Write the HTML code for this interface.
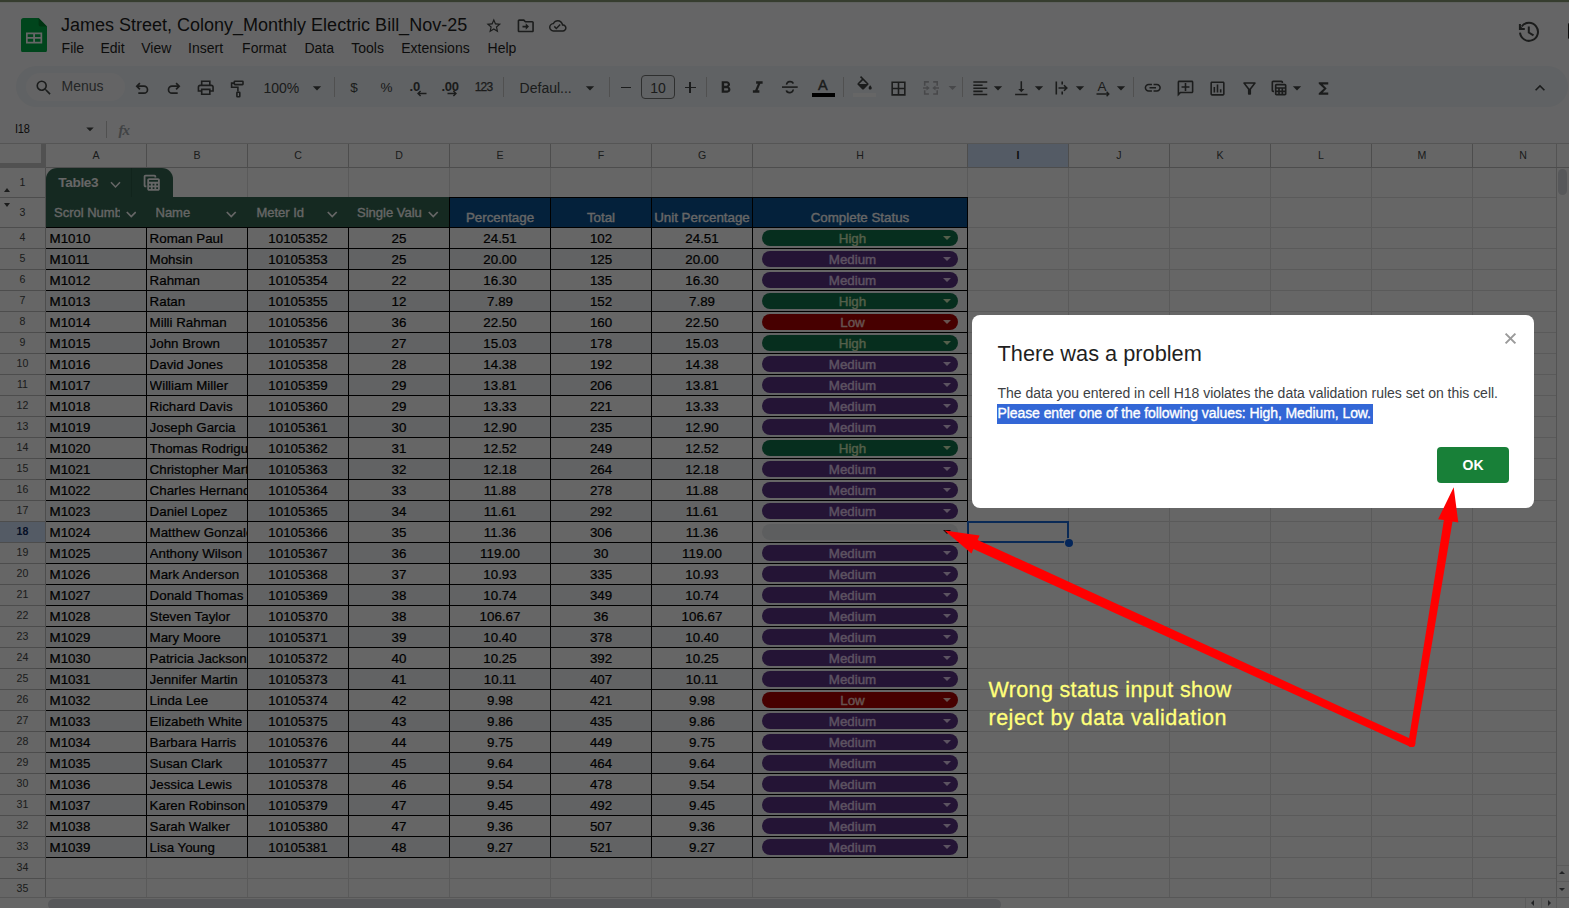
<!DOCTYPE html><html><head><meta charset="utf-8"><title>Sheet</title><style>

html,body{margin:0;padding:0;}
body{width:1569px;height:908px;overflow:hidden;background:#fff;font-family:"Liberation Sans",sans-serif;}
#root{position:relative;width:1569px;height:908px;overflow:hidden;background:#fff;}
.a{position:absolute;display:block;}
.t{position:absolute;white-space:nowrap;line-height:1;}
.c{position:absolute;white-space:nowrap;overflow:hidden;line-height:1;font-size:13.33px;color:#000;height:20px;}
.c span{position:absolute;top:3.7px;-webkit-text-stroke:0.22px #000;}
.chip{position:absolute;height:16px;border-radius:8px;left:762px;width:196px;}
.chip b{position:absolute;left:0;width:181px;text-align:center;font-weight:normal;font-size:13.33px;line-height:1;top:1.5px;-webkit-text-stroke:0.4px currentColor;}
.chip i{position:absolute;left:181px;top:6px;width:0;height:0;border-left:4px solid transparent;border-right:4px solid transparent;border-top:4.5px solid #fff;}
.sep{position:absolute;width:1px;background:#c7c7c7;top:77px;height:20px;}

</style></head><body><div id="root">
<div id="sheet" class="a" style="left:0;top:0;width:1569px;height:908px;background:#fff;">
<div class="a" style="left:0;top:0;width:1569px;height:143px;background:#fdfdfe;"></div>
<svg class="a" style="left:21px;top:17.5px" width="26" height="34.5" viewBox="0 0 26 34.5"><path d="M2.6 0H17.6L26 8.6V31.9a2.6 2.6 0 0 1-2.6 2.6H2.6A2.600 2.600 0 0 1 0 31.900V2.600A2.600 2.600 0 0 1 2.600 0z" fill="#00ac47"/><path d="M17.6 0L26 8.6H19.600a2 2 0 0 1-2-2z" fill="#00832d"/><path d="M5 14.500h16.200v10.900H5zM6.700 16.200v2.900h5.500v-2.900zm7.300 0v2.900h5.500v-2.900zM6.700 20.800v2.900h5.500v-2.900zm7.300 0v2.900h5.500v-2.900z" fill="#fff" fill-rule="evenodd"/></svg>
<div class="t title" style="left:61px;top:15.76px;font-size:18px;color:#1f1f1f;">James Street, Colony_Monthly Electric Bill_Nov-25</div>
<svg class="a" style="left:485.40px;top:16.50px;" width="17.6" height="17.6" viewBox="0 0 24 24" ><path fill="#444746" d="M22 9.24l-7.19-.62L12 2 9.19 8.63 2 9.24l5.46 4.73L5.82 21 12 17.27 18.18 21l-1.63-7.03L22 9.24zM12 15.4l-3.76 2.27 1-4.28-3.32-2.88 4.38-.38L12 6.1l1.71 4.04 4.38.38-3.32 2.88 1 4.28L12 15.4z"/></svg>
<svg class="a" style="left:516.25px;top:16.25px;" width="19.5" height="19.5" viewBox="0 0 24 24" ><path fill="#444746" d="M20 6h-8l-2-2H4c-1.1 0-2 .9-2 2v12c0 1.1.9 2 2 2h16c1.1 0 2-.9 2-2V8c0-1.1-.9-2-2-2zm0 12H4V6h5.17l2 2H20v10zm-8-1l4-4-4-4v3H8v2h4v3z"/></svg>
<svg class="a" style="left:549.20px;top:16.70px;" width="17.6" height="17.6" viewBox="0 0 24 24" ><path fill="#444746" d="M19.35 10.04C18.67 6.59 15.64 4 12 4 9.11 4 6.6 5.64 5.35 8.04 2.34 8.36 0 10.91 0 14c0 3.31 2.69 6 6 6h13c2.76 0 5-2.24 5-5 0-2.64-2.05-4.78-4.65-4.96zM19 18H6c-2.21 0-4-1.79-4-4 0-2.05 1.53-3.76 3.56-3.97l1.07-.11.5-.95C8.08 7.14 9.94 6 12 6c2.62 0 4.88 1.86 5.39 4.43l.3 1.5 1.53.11c1.56.1 2.78 1.41 2.78 2.96 0 1.65-1.35 3-3 3zm-9-3.82l-2.09-2.09L6.5 13.5 10 17l6.01-6.01-1.41-1.41z"/></svg>
<div class="t menu" style="left:61.6px;top:40.85px;font-size:14px;color:#1f1f1f;">File</div>
<div class="t menu" style="left:100.4px;top:40.85px;font-size:14px;color:#1f1f1f;">Edit</div>
<div class="t menu" style="left:141.20000000000002px;top:40.85px;font-size:14px;color:#1f1f1f;">View</div>
<div class="t menu" style="left:188.1px;top:40.85px;font-size:14px;color:#1f1f1f;">Insert</div>
<div class="t menu" style="left:242.1px;top:40.85px;font-size:14px;color:#1f1f1f;">Format</div>
<div class="t menu" style="left:304.4px;top:40.85px;font-size:14px;color:#1f1f1f;">Data</div>
<div class="t menu" style="left:351.29999999999995px;top:40.85px;font-size:14px;color:#1f1f1f;">Tools</div>
<div class="t menu" style="left:401.2px;top:40.85px;font-size:14px;color:#1f1f1f;">Extensions</div>
<div class="t menu" style="left:487.59999999999997px;top:40.85px;font-size:14px;color:#1f1f1f;">Help</div>
<svg class="a" style="left:1517px;top:20px" width="24" height="24" viewBox="0 0 24 24"><path d="M3 12.700A9 9 0 1 0 4.700 6.500" fill="none" stroke="#444746" stroke-width="2"/><path d="M2.900 4.100V8.900H7.800" fill="none" stroke="#444746" stroke-width="2"/><path d="M2.900 5.500L6.400 8.900H2.900z" fill="#444746"/><path d="M11.800 6.400V12.500L16.500 15.400" fill="none" stroke="#444746" stroke-width="2"/></svg>
<div class="a" style="left:1567.600px;top:23px;width:3px;height:15.500px;border-radius:2px;background:#1f1f1f;"></div>
<div class="a" style="left:16px;top:66.300px;width:1552px;height:40.700px;border-radius:20.350px;background:#f0f4f9;"></div>
<div class="a" style="left:26px;top:73px;width:99px;height:28px;border-radius:14px;background:#f9fbfd;"></div>
<svg class="a" style="left:34.05px;top:78.15px;" width="19.5" height="19.5" viewBox="0 0 24 24" ><path fill="#444746" d="M15.5 14h-.79l-.28-.27A6.471 6.471 0 0 0 16 9.5 6.5 6.5 0 1 0 9.5 16c1.61 0 3.09-.59 4.23-1.57l.27.28v.79l5 4.99L20.49 19l-4.99-5zm-6 0C7.01 14 5 11.99 5 9.5S7.01 5 9.5 5 14 7.01 14 9.5 11.99 14 9.5 14z"/></svg>
<div class="t" style="left:61.5px;top:79.15px;font-size:14px;color:#5a5d60;">Menus</div>
<svg class="a" style="left:134px;top:80px" width="16" height="16" viewBox="0 0 16 16"><path d="M3 6.200H10a3.500 3.500 0 0 1 0 7H4.300" fill="none" stroke="#444746" stroke-width="1.700"/><path d="M5.900 3.100L2.800 6.200 5.900 9.300" fill="none" stroke="#444746" stroke-width="1.700"/></svg>
<svg class="a" style="left:166px;top:80px" width="16" height="16" viewBox="0 0 16 16"><path d="M13 6.200H6a3.500 3.500 0 0 0 0 7h5.700" fill="none" stroke="#444746" stroke-width="1.700"/><path d="M10.100 3.100l3.100 3.100-3.100 3.100" fill="none" stroke="#444746" stroke-width="1.700"/></svg>
<svg class="a" style="left:196.25px;top:78.45px;" width="19.5" height="19.5" viewBox="0 0 24 24" ><path fill="#444746" d="M19 8h-1V3H6v5H5c-1.66 0-3 1.34-3 3v6h4v4h12v-4h4v-6c0-1.66-1.34-3-3-3zM8 5h8v3H8V5zm8 14H8v-4h8v4zm2-4v-2H6v2H4v-4c0-.55.45-1 1-1h14c.55 0 1 .45 1 1v4h-2z"/></svg>
<svg class="a" style="left:229px;top:79.5px" width="17" height="18" viewBox="0 0 17 18"><rect x="5.300" y="1.200" width="8.700" height="3.400" rx="0.600" fill="none" stroke="#444746" stroke-width="1.600"/><path d="M5.300 3.100H2.600V7.200H8.900V11.600" fill="none" stroke="#444746" stroke-width="1.600"/><rect x="7.900" y="12.200" width="2.900" height="4.500" rx="0.500" fill="none" stroke="#444746" stroke-width="1.600"/></svg>
<div class="t" style="left:263.4px;top:81.15px;font-size:14px;color:#444746;">100%</div>
<svg class="a" style="left:307.00px;top:78.00px;" width="20" height="20" viewBox="0 0 24 24" ><path fill="#444746" d="M7 10l5 5 5-5z"/></svg>
<div class="sep" style="left:334px"></div>
<div class="t" style="left:350.3px;top:80.77px;font-size:13.5px;color:#444746;">$</div>
<div class="t" style="left:380.6px;top:80.77px;font-size:13.5px;color:#444746;">%</div>
<div class="t" style="left:409.6px;top:80.30px;font-size:13px;color:#444746;font-weight:bold;letter-spacing:-0.3px;">.0</div>
<svg class="a" style="left:416px;top:90px" width="11" height="7" viewBox="0 0 11 7"><path d="M10.500 3.500H2M4.600 0.900L2 3.500l2.600 2.600" fill="none" stroke="#444746" stroke-width="1.400"/></svg>
<div class="t" style="left:441.5px;top:80.30px;font-size:13px;color:#444746;font-weight:bold;letter-spacing:-0.3px;">.00</div>
<svg class="a" style="left:447px;top:90px" width="11" height="7" viewBox="0 0 11 7"><path d="M0.500 3.500H9M6.400 0.900L9 3.500 6.400 6.100" fill="none" stroke="#444746" stroke-width="1.400"/></svg>
<div class="t" style="left:474.7px;top:81.34px;font-size:12px;color:#444746;letter-spacing:-0.800px;-webkit-text-stroke:0.250px #444746;">123</div>
<div class="sep" style="left:503px"></div>
<div class="t" style="left:519.6px;top:80.85px;font-size:14px;color:#444746;">Defaul...</div>
<svg class="a" style="left:580.00px;top:78.00px;" width="20" height="20" viewBox="0 0 24 24" ><path fill="#444746" d="M7 10l5 5 5-5z"/></svg>
<div class="sep" style="left:609px"></div>
<div class="a" style="left:621px;top:86.600px;width:10px;height:1.700px;background:#444746;"></div>
<div class="a" style="left:641px;top:75px;width:32px;height:22px;border:1px solid #747775;border-radius:4px;"></div>
<div class="t" style="left:641px;top:80.85px;font-size:14px;color:#444746;width:34px;text-align:center;">10</div>
<div class="a" style="left:685px;top:86.600px;width:10.600px;height:1.700px;background:#444746;"></div>
<div class="a" style="left:689.450px;top:82.100px;width:1.700px;height:10.600px;background:#444746;"></div>
<div class="sep" style="left:706px"></div>
<svg class="a" style="left:715.85px;top:77.95px;" width="19.5" height="19.5" viewBox="0 0 24 24" ><path fill="#444746" d="M15.6 10.79c.97-.67 1.65-1.77 1.65-2.79 0-2.26-1.75-4-4-4H7v14h7.04c2.09 0 3.71-1.7 3.71-3.79 0-1.52-.86-2.82-2.15-3.42zM10 6.5h3c.83 0 1.5.67 1.5 1.5s-.67 1.5-1.5 1.5h-3v-3zm3.5 9H10v-3h3.5c.83 0 1.5.67 1.5 1.5s-.67 1.5-1.5 1.5z"/></svg>
<svg class="a" style="left:748.05px;top:77.95px;" width="19.5" height="19.5" viewBox="0 0 24 24" ><path fill="#444746" d="M10 4v3h2.21l-3.42 8H6v3h8v-3h-2.21l3.42-8H18V4z"/></svg>
<svg class="a" style="left:781px;top:78.9px" width="18" height="16" viewBox="0 0 18 16"><path d="M1 8.100H16.700" fill="none" stroke="#444746" stroke-width="1.600"/><path d="M5.700 5.700C5.200 1.900 11.600 1.700 12.100 4.600M12 10.500C12.600 14.300 5.900 14.500 5.400 11.400" fill="none" stroke="#444746" stroke-width="1.700"/></svg>
<div class="t" style="left:818px;top:78.03px;font-size:14.5px;color:#444746;-webkit-text-stroke:0.400px #444746;">A</div>
<div class="a" style="left:812px;top:93px;width:23px;height:4px;background:#000;"></div>
<div class="sep" style="left:843px"></div>
<svg class="a" style="left:854.70px;top:76.20px;" width="19.2" height="19.2" viewBox="0 0 24 24" ><path fill="#444746" d="M16.56 8.94L7.62 0 6.21 1.41l2.38 2.38-5.15 5.15c-.59.59-.59 1.54 0 2.12l5.5 5.5c.29.29.68.44 1.06.44s.77-.15 1.06-.44l5.5-5.5c.59-.58.59-1.53 0-2.12zM5.21 10L10 5.21 14.79 10H5.21zM19 11.5s-2 2.17-2 3.5c0 1.1.9 2 2 2s2-.9 2-2c0-1.33-2-3.5-2-3.5z"/></svg>
<div class="a" style="left:853px;top:93px;width:23px;height:4px;background:#ffffff;"></div>
<svg class="a" style="left:888.50px;top:78.50px;" width="19" height="19" viewBox="0 0 24 24" ><path fill="#444746" d="M3 3v18h18V3H3zm8 16H5v-6h6v6zm0-8H5V5h6v6zm8 8h-6v-6h6v6zm0-8h-6V5h6v6z"/></svg>
<svg class="a" style="left:922px;top:80px" width="18" height="16" viewBox="0 0 18 16"><path d="M6.900 1.900H2.700V5.700M11.200 1.900H15.200V5.700M6.900 14H2.700V10.200M11.200 14H15.200V10.200" fill="none" stroke="#b2b4b9" stroke-width="1.600"/><path d="M1 8H5M17 8H13" fill="none" stroke="#b2b4b9" stroke-width="1.500"/><path d="M4.500 5.400L7.700 8 4.500 10.600zM13.500 5.400L10.300 8l3.200 2.600z" fill="#b2b4b9"/></svg>
<svg class="a" style="left:942.50px;top:78.30px;" width="19" height="19" viewBox="0 0 24 24" ><path fill="#b2b4b9" d="M7 10l5 5 5-5z"/></svg>
<div class="sep" style="left:962px"></div>
<svg class="a" style="left:970.70px;top:78.70px;" width="18.6" height="18.6" viewBox="0 0 24 24" ><path fill="#444746" d="M15 15H3v2h12v-2zm0-8H3v2h12V7zM3 13h18v-2H3v2zm0 8h18v-2H3v2zM3 3v2h18V3H3z"/></svg>
<svg class="a" style="left:988.00px;top:78.00px;" width="20" height="20" viewBox="0 0 24 24" ><path fill="#444746" d="M7 10l5 5 5-5z"/></svg>
<svg class="a" style="left:1011.70px;top:78.70px;" width="18.6" height="18.6" viewBox="0 0 24 24" ><path fill="#444746" d="M16 13h-3V3h-2v10H8l4 4 4-4zM4 19v2h16v-2H4z"/></svg>
<svg class="a" style="left:1029.00px;top:78.00px;" width="20" height="20" viewBox="0 0 24 24" ><path fill="#444746" d="M7 10l5 5 5-5z"/></svg>
<svg class="a" style="left:1055px;top:81px" width="14" height="14" viewBox="0 0 14 14"><path d="M1.300 0.500v13M7.200 0.500v3M7.200 10.500v3" fill="none" stroke="#444746" stroke-width="1.600"/><path d="M3.500 7H11.500M9 4.200L11.800 7 9 9.800" fill="none" stroke="#444746" stroke-width="1.600"/></svg>
<svg class="a" style="left:1070.00px;top:78.00px;" width="20" height="20" viewBox="0 0 24 24" ><path fill="#444746" d="M7 10l5 5 5-5z"/></svg>
<div class="t" style="left:1097.5px;top:79.57px;font-size:13.5px;color:#444746;">A</div>
<svg class="a" style="left:1096px;top:91px" width="15" height="6" viewBox="0 0 15 6"><path d="M0.500 3H12.500M10.600 0.800L12.800 3 10.600 5.200" fill="none" stroke="#444746" stroke-width="1.400"/></svg>
<svg class="a" style="left:1111.00px;top:78.00px;" width="20" height="20" viewBox="0 0 24 24" ><path fill="#444746" d="M7 10l5 5 5-5z"/></svg>
<div class="sep" style="left:1133px"></div>
<svg class="a" style="left:1143.25px;top:78.25px;" width="19.5" height="19.5" viewBox="0 0 24 24" ><path fill="#444746" d="M3.9 12c0-1.71 1.39-3.1 3.1-3.1h4V7H7c-2.76 0-5 2.24-5 5s2.24 5 5 5h4v-1.9H7c-1.71 0-3.1-1.39-3.1-3.1zM8 13h8v-2H8v2zm9-6h-4v1.9h4c1.71 0 3.1 1.39 3.1 3.1s-1.39 3.1-3.1 3.1h-4V17h4c2.76 0 5-2.24 5-5s-2.24-5-5-5z"/></svg>
<svg class="a" style="left:1175.50px;top:78.80px;transform:scaleX(-1);" width="19" height="19" viewBox="0 0 24 24" ><path fill="#444746" d="M22 4c0-1.1-.9-2-2-2H4c-1.1 0-2 .9-2 2v12c0 1.1.9 2 2 2h14l4 4V4zm-2 13.17L18.83 16H4V4h16v13.17zM13 5h-2v4H7v2h4v4h2v-4h4V9h-4z"/></svg>
<svg class="a" style="left:1207.50px;top:78.50px;" width="19" height="19" viewBox="0 0 24 24" ><path fill="#444746" d="M9 17H7v-7h2v7zm4 0h-2V7h2v10zm4 0h-2v-4h2v4zm2 2H5V5h14v14zm0-16H5c-1.1 0-2 .9-2 2v14c0 1.1.9 2 2 2h14c1.1 0 2-.9 2-2V5c0-1.1-.9-2-2-2z"/></svg>
<svg class="a" style="left:1239.50px;top:78.80px;" width="19" height="19" viewBox="0 0 24 24" ><path fill="#444746" d="M7 6h10l-5.01 6.3L7 6zm-2.750-.39C6.27 8.2 10 13 10 13v6c0 .55.45 1 1 1h2c.55 0 1-.45 1-1v-6s3.72-4.8 5.74-7.39c.51-.66.04-1.61-.79-1.61H5.04c-.83 0-1.3.95-.79 1.61z"/></svg>
<svg class="a" style="left:1268.50px;top:78.00px;" width="20" height="20" viewBox="0 0 24 24" ><path fill="#444746" d="M19 7H9c-1.1 0-2 .9-2 2v10c0 1.1.9 2 2 2h10c1.1 0 2-.9 2-2V9c0-1.1-.9-2-2-2zm0 2v2H9V9h10zm-6 6v-2h2v2h-2zm2 2v2h-2v-2h2zm-4-2H9v-2h2v2zm6-2h2v2h-2v-2zm-8 4h2v2H9v-2zm8 2v-2h2v2h-2zM6 17H5c-1.1 0-2-.9-2-2V5c0-1.1.9-2 2-2h10c1.1 0 2 .9 2 2v1h-2V5H5v10h1v2z"/></svg>
<svg class="a" style="left:1287.00px;top:78.00px;" width="20" height="20" viewBox="0 0 24 24" ><path fill="#444746" d="M7 10l5 5 5-5z"/></svg>
<svg class="a" style="left:1313.50px;top:78.50px;" width="19" height="19" viewBox="0 0 24 24" ><path fill="#444746" d="M18 4H6v2l6.5 6L6 18v2h12v-3h-7l5-5-5-5h7z"/></svg>
<svg class="a" style="left:1530.00px;top:78.30px;" width="20" height="20" viewBox="0 0 24 24" ><path fill="#444746" d="M12 8l-6 6 1.41 1.41L12 10.83l4.59 4.58L18 14z"/></svg>
<div class="t" style="left:14.8px;top:122.67px;font-size:12.2px;color:#1f1f1f;letter-spacing:-0.2px;transform:scaleX(0.9);transform-origin:0 0;">I18</div>
<svg class="a" style="left:81.00px;top:120.00px;" width="18" height="18" viewBox="0 0 24 24" ><path fill="#444746" d="M7 10l5 5 5-5z"/></svg>
<div class="a" style="left:106px;top:121px;width:1px;height:17px;background:#c7c7c7;"></div>
<div class="t" style="left:118.500px;top:122.500px;font-size:15px;font-weight:bold;color:#a3a8ad;font-family:'Liberation Serif',serif;font-style:italic;letter-spacing:-1px;">fx</div>
<div class="a" style="left:0;top:143px;width:1569px;height:1px;background:#d5d5d5;"></div>
<div class="a" style="left:968px;top:144px;width:100px;height:23px;background:#d3e3fd;"></div>
<div class="t" style="left:46px;top:149.83px;font-size:10.6px;color:#444746;width:100px;text-align:center;">A</div>
<div class="a" style="left:146px;top:144px;width:1px;height:753px;background:#e1e1e1;"></div>
<div class="t" style="left:147px;top:149.83px;font-size:10.6px;color:#444746;width:100px;text-align:center;">B</div>
<div class="a" style="left:247px;top:144px;width:1px;height:753px;background:#e1e1e1;"></div>
<div class="t" style="left:248px;top:149.83px;font-size:10.6px;color:#444746;width:100px;text-align:center;">C</div>
<div class="a" style="left:348px;top:144px;width:1px;height:753px;background:#e1e1e1;"></div>
<div class="t" style="left:349px;top:149.83px;font-size:10.6px;color:#444746;width:100px;text-align:center;">D</div>
<div class="a" style="left:449px;top:144px;width:1px;height:753px;background:#e1e1e1;"></div>
<div class="t" style="left:450px;top:149.83px;font-size:10.6px;color:#444746;width:100px;text-align:center;">E</div>
<div class="a" style="left:550px;top:144px;width:1px;height:753px;background:#e1e1e1;"></div>
<div class="t" style="left:551px;top:149.83px;font-size:10.6px;color:#444746;width:100px;text-align:center;">F</div>
<div class="a" style="left:651px;top:144px;width:1px;height:753px;background:#e1e1e1;"></div>
<div class="t" style="left:652px;top:149.83px;font-size:10.6px;color:#444746;width:100px;text-align:center;">G</div>
<div class="a" style="left:752px;top:144px;width:1px;height:753px;background:#e1e1e1;"></div>
<div class="t" style="left:753px;top:149.83px;font-size:10.6px;color:#444746;width:214px;text-align:center;">H</div>
<div class="a" style="left:967px;top:144px;width:1px;height:753px;background:#e1e1e1;"></div>
<div class="t" style="left:968px;top:149.83px;font-size:10.6px;color:#1f1f1f;font-weight:bold;width:100px;text-align:center;">I</div>
<div class="a" style="left:1068px;top:144px;width:1px;height:753px;background:#e1e1e1;"></div>
<div class="t" style="left:1069px;top:149.83px;font-size:10.6px;color:#444746;width:100px;text-align:center;">J</div>
<div class="a" style="left:1169px;top:144px;width:1px;height:753px;background:#e1e1e1;"></div>
<div class="t" style="left:1170px;top:149.83px;font-size:10.6px;color:#444746;width:100px;text-align:center;">K</div>
<div class="a" style="left:1270px;top:144px;width:1px;height:753px;background:#e1e1e1;"></div>
<div class="t" style="left:1271px;top:149.83px;font-size:10.6px;color:#444746;width:100px;text-align:center;">L</div>
<div class="a" style="left:1371px;top:144px;width:1px;height:753px;background:#e1e1e1;"></div>
<div class="t" style="left:1372px;top:149.83px;font-size:10.6px;color:#444746;width:100px;text-align:center;">M</div>
<div class="a" style="left:1472px;top:144px;width:1px;height:753px;background:#e1e1e1;"></div>
<div class="t" style="left:1473px;top:149.83px;font-size:10.6px;color:#444746;width:100px;text-align:center;">N</div>
<div class="a" style="left:146px;top:144px;width:1px;height:23px;background:#c0c0c0;"></div>
<div class="a" style="left:247px;top:144px;width:1px;height:23px;background:#c0c0c0;"></div>
<div class="a" style="left:348px;top:144px;width:1px;height:23px;background:#c0c0c0;"></div>
<div class="a" style="left:449px;top:144px;width:1px;height:23px;background:#c0c0c0;"></div>
<div class="a" style="left:550px;top:144px;width:1px;height:23px;background:#c0c0c0;"></div>
<div class="a" style="left:651px;top:144px;width:1px;height:23px;background:#c0c0c0;"></div>
<div class="a" style="left:752px;top:144px;width:1px;height:23px;background:#c0c0c0;"></div>
<div class="a" style="left:967px;top:144px;width:1px;height:23px;background:#c0c0c0;"></div>
<div class="a" style="left:1068px;top:144px;width:1px;height:23px;background:#c0c0c0;"></div>
<div class="a" style="left:1169px;top:144px;width:1px;height:23px;background:#c0c0c0;"></div>
<div class="a" style="left:1270px;top:144px;width:1px;height:23px;background:#c0c0c0;"></div>
<div class="a" style="left:1371px;top:144px;width:1px;height:23px;background:#c0c0c0;"></div>
<div class="a" style="left:1472px;top:144px;width:1px;height:23px;background:#c0c0c0;"></div>
<div class="a" style="left:1556px;top:144px;width:1px;height:753px;background:#d0d0d0;"></div>
<div class="a" style="left:46px;top:167px;width:1523px;height:1px;background:#c0c0c0;"></div>
<div class="a" style="left:41px;top:144px;width:5px;height:24px;background:#cbcbcb;"></div>
<div class="a" style="left:0px;top:163px;width:46px;height:5px;background:#cbcbcb;"></div>
<div class="a" style="left:45px;top:168px;width:1px;height:729px;background:#c0c0c0;"></div>
<div class="a" style="left:0;top:197px;width:46px;height:1px;background:#c0c0c0;"></div>
<div class="a" style="left:46px;top:197px;width:1510px;height:1px;background:#e1e1e1;"></div>
<div class="t" style="left:0px;top:177.23px;font-size:10.6px;color:#444746;width:45px;text-align:center;">1</div>
<div class="a" style="left:0;top:227px;width:46px;height:1px;background:#c0c0c0;"></div>
<div class="a" style="left:46px;top:227px;width:1510px;height:1px;background:#e1e1e1;"></div>
<div class="t" style="left:0px;top:207.03px;font-size:10.6px;color:#444746;width:45px;text-align:center;">3</div>
<div class="a" style="left:0;top:248px;width:46px;height:1px;background:#c0c0c0;"></div>
<div class="a" style="left:46px;top:248px;width:1510px;height:1px;background:#e1e1e1;"></div>
<div class="t" style="left:0px;top:231.93px;font-size:10.6px;color:#444746;width:45px;text-align:center;">4</div>
<div class="a" style="left:0;top:269px;width:46px;height:1px;background:#c0c0c0;"></div>
<div class="a" style="left:46px;top:269px;width:1510px;height:1px;background:#e1e1e1;"></div>
<div class="t" style="left:0px;top:252.93px;font-size:10.6px;color:#444746;width:45px;text-align:center;">5</div>
<div class="a" style="left:0;top:290px;width:46px;height:1px;background:#c0c0c0;"></div>
<div class="a" style="left:46px;top:290px;width:1510px;height:1px;background:#e1e1e1;"></div>
<div class="t" style="left:0px;top:273.93px;font-size:10.6px;color:#444746;width:45px;text-align:center;">6</div>
<div class="a" style="left:0;top:311px;width:46px;height:1px;background:#c0c0c0;"></div>
<div class="a" style="left:46px;top:311px;width:1510px;height:1px;background:#e1e1e1;"></div>
<div class="t" style="left:0px;top:294.93px;font-size:10.6px;color:#444746;width:45px;text-align:center;">7</div>
<div class="a" style="left:0;top:332px;width:46px;height:1px;background:#c0c0c0;"></div>
<div class="a" style="left:46px;top:332px;width:1510px;height:1px;background:#e1e1e1;"></div>
<div class="t" style="left:0px;top:315.93px;font-size:10.6px;color:#444746;width:45px;text-align:center;">8</div>
<div class="a" style="left:0;top:353px;width:46px;height:1px;background:#c0c0c0;"></div>
<div class="a" style="left:46px;top:353px;width:1510px;height:1px;background:#e1e1e1;"></div>
<div class="t" style="left:0px;top:336.93px;font-size:10.6px;color:#444746;width:45px;text-align:center;">9</div>
<div class="a" style="left:0;top:374px;width:46px;height:1px;background:#c0c0c0;"></div>
<div class="a" style="left:46px;top:374px;width:1510px;height:1px;background:#e1e1e1;"></div>
<div class="t" style="left:0px;top:357.93px;font-size:10.6px;color:#444746;width:45px;text-align:center;">10</div>
<div class="a" style="left:0;top:395px;width:46px;height:1px;background:#c0c0c0;"></div>
<div class="a" style="left:46px;top:395px;width:1510px;height:1px;background:#e1e1e1;"></div>
<div class="t" style="left:0px;top:378.93px;font-size:10.6px;color:#444746;width:45px;text-align:center;">11</div>
<div class="a" style="left:0;top:416px;width:46px;height:1px;background:#c0c0c0;"></div>
<div class="a" style="left:46px;top:416px;width:1510px;height:1px;background:#e1e1e1;"></div>
<div class="t" style="left:0px;top:399.93px;font-size:10.6px;color:#444746;width:45px;text-align:center;">12</div>
<div class="a" style="left:0;top:437px;width:46px;height:1px;background:#c0c0c0;"></div>
<div class="a" style="left:46px;top:437px;width:1510px;height:1px;background:#e1e1e1;"></div>
<div class="t" style="left:0px;top:420.93px;font-size:10.6px;color:#444746;width:45px;text-align:center;">13</div>
<div class="a" style="left:0;top:458px;width:46px;height:1px;background:#c0c0c0;"></div>
<div class="a" style="left:46px;top:458px;width:1510px;height:1px;background:#e1e1e1;"></div>
<div class="t" style="left:0px;top:441.93px;font-size:10.6px;color:#444746;width:45px;text-align:center;">14</div>
<div class="a" style="left:0;top:479px;width:46px;height:1px;background:#c0c0c0;"></div>
<div class="a" style="left:46px;top:479px;width:1510px;height:1px;background:#e1e1e1;"></div>
<div class="t" style="left:0px;top:462.93px;font-size:10.6px;color:#444746;width:45px;text-align:center;">15</div>
<div class="a" style="left:0;top:500px;width:46px;height:1px;background:#c0c0c0;"></div>
<div class="a" style="left:46px;top:500px;width:1510px;height:1px;background:#e1e1e1;"></div>
<div class="t" style="left:0px;top:483.93px;font-size:10.6px;color:#444746;width:45px;text-align:center;">16</div>
<div class="a" style="left:0;top:521px;width:46px;height:1px;background:#c0c0c0;"></div>
<div class="a" style="left:46px;top:521px;width:1510px;height:1px;background:#e1e1e1;"></div>
<div class="t" style="left:0px;top:504.93px;font-size:10.6px;color:#444746;width:45px;text-align:center;">17</div>
<div class="a" style="left:0;top:542px;width:46px;height:1px;background:#c0c0c0;"></div>
<div class="a" style="left:46px;top:542px;width:1510px;height:1px;background:#e1e1e1;"></div>
<div class="a" style="left:0;top:522px;width:45px;height:20px;background:#d3e3fd;"></div>
<div class="t" style="left:0px;top:525.93px;font-size:10.6px;color:#0b2a5c;font-weight:bold;width:45px;text-align:center;">18</div>
<div class="a" style="left:0;top:563px;width:46px;height:1px;background:#c0c0c0;"></div>
<div class="a" style="left:46px;top:563px;width:1510px;height:1px;background:#e1e1e1;"></div>
<div class="t" style="left:0px;top:546.93px;font-size:10.6px;color:#444746;width:45px;text-align:center;">19</div>
<div class="a" style="left:0;top:584px;width:46px;height:1px;background:#c0c0c0;"></div>
<div class="a" style="left:46px;top:584px;width:1510px;height:1px;background:#e1e1e1;"></div>
<div class="t" style="left:0px;top:567.93px;font-size:10.6px;color:#444746;width:45px;text-align:center;">20</div>
<div class="a" style="left:0;top:605px;width:46px;height:1px;background:#c0c0c0;"></div>
<div class="a" style="left:46px;top:605px;width:1510px;height:1px;background:#e1e1e1;"></div>
<div class="t" style="left:0px;top:588.93px;font-size:10.6px;color:#444746;width:45px;text-align:center;">21</div>
<div class="a" style="left:0;top:626px;width:46px;height:1px;background:#c0c0c0;"></div>
<div class="a" style="left:46px;top:626px;width:1510px;height:1px;background:#e1e1e1;"></div>
<div class="t" style="left:0px;top:609.93px;font-size:10.6px;color:#444746;width:45px;text-align:center;">22</div>
<div class="a" style="left:0;top:647px;width:46px;height:1px;background:#c0c0c0;"></div>
<div class="a" style="left:46px;top:647px;width:1510px;height:1px;background:#e1e1e1;"></div>
<div class="t" style="left:0px;top:630.93px;font-size:10.6px;color:#444746;width:45px;text-align:center;">23</div>
<div class="a" style="left:0;top:668px;width:46px;height:1px;background:#c0c0c0;"></div>
<div class="a" style="left:46px;top:668px;width:1510px;height:1px;background:#e1e1e1;"></div>
<div class="t" style="left:0px;top:651.93px;font-size:10.6px;color:#444746;width:45px;text-align:center;">24</div>
<div class="a" style="left:0;top:689px;width:46px;height:1px;background:#c0c0c0;"></div>
<div class="a" style="left:46px;top:689px;width:1510px;height:1px;background:#e1e1e1;"></div>
<div class="t" style="left:0px;top:672.93px;font-size:10.6px;color:#444746;width:45px;text-align:center;">25</div>
<div class="a" style="left:0;top:710px;width:46px;height:1px;background:#c0c0c0;"></div>
<div class="a" style="left:46px;top:710px;width:1510px;height:1px;background:#e1e1e1;"></div>
<div class="t" style="left:0px;top:693.93px;font-size:10.6px;color:#444746;width:45px;text-align:center;">26</div>
<div class="a" style="left:0;top:731px;width:46px;height:1px;background:#c0c0c0;"></div>
<div class="a" style="left:46px;top:731px;width:1510px;height:1px;background:#e1e1e1;"></div>
<div class="t" style="left:0px;top:714.93px;font-size:10.6px;color:#444746;width:45px;text-align:center;">27</div>
<div class="a" style="left:0;top:752px;width:46px;height:1px;background:#c0c0c0;"></div>
<div class="a" style="left:46px;top:752px;width:1510px;height:1px;background:#e1e1e1;"></div>
<div class="t" style="left:0px;top:735.93px;font-size:10.6px;color:#444746;width:45px;text-align:center;">28</div>
<div class="a" style="left:0;top:773px;width:46px;height:1px;background:#c0c0c0;"></div>
<div class="a" style="left:46px;top:773px;width:1510px;height:1px;background:#e1e1e1;"></div>
<div class="t" style="left:0px;top:756.93px;font-size:10.6px;color:#444746;width:45px;text-align:center;">29</div>
<div class="a" style="left:0;top:794px;width:46px;height:1px;background:#c0c0c0;"></div>
<div class="a" style="left:46px;top:794px;width:1510px;height:1px;background:#e1e1e1;"></div>
<div class="t" style="left:0px;top:777.93px;font-size:10.6px;color:#444746;width:45px;text-align:center;">30</div>
<div class="a" style="left:0;top:815px;width:46px;height:1px;background:#c0c0c0;"></div>
<div class="a" style="left:46px;top:815px;width:1510px;height:1px;background:#e1e1e1;"></div>
<div class="t" style="left:0px;top:798.93px;font-size:10.6px;color:#444746;width:45px;text-align:center;">31</div>
<div class="a" style="left:0;top:836px;width:46px;height:1px;background:#c0c0c0;"></div>
<div class="a" style="left:46px;top:836px;width:1510px;height:1px;background:#e1e1e1;"></div>
<div class="t" style="left:0px;top:819.93px;font-size:10.6px;color:#444746;width:45px;text-align:center;">32</div>
<div class="a" style="left:0;top:857px;width:46px;height:1px;background:#c0c0c0;"></div>
<div class="a" style="left:46px;top:857px;width:1510px;height:1px;background:#e1e1e1;"></div>
<div class="t" style="left:0px;top:840.93px;font-size:10.6px;color:#444746;width:45px;text-align:center;">33</div>
<div class="a" style="left:0;top:878px;width:46px;height:1px;background:#c0c0c0;"></div>
<div class="a" style="left:46px;top:878px;width:1510px;height:1px;background:#e1e1e1;"></div>
<div class="t" style="left:0px;top:861.93px;font-size:10.6px;color:#444746;width:45px;text-align:center;">34</div>
<div class="a" style="left:0;top:899px;width:46px;height:1px;background:#c0c0c0;"></div>
<div class="a" style="left:46px;top:899px;width:1510px;height:1px;background:#e1e1e1;"></div>
<div class="t" style="left:0px;top:882.93px;font-size:10.6px;color:#444746;width:45px;text-align:center;">35</div>
<div class="a" style="left:4px;top:188px;width:0;height:0;border-left:3.500px solid transparent;border-right:3.500px solid transparent;border-bottom:4px solid #444746;"></div>
<div class="a" style="left:4px;top:203px;width:0;height:0;border-left:3.500px solid transparent;border-right:3.500px solid transparent;border-top:4px solid #444746;"></div>
<div class="a" style="left:46px;top:168px;width:127px;height:30px;background:#356854;border-radius:11px 11px 0 0;"></div>
<div class="a" style="left:131px;top:168px;width:1px;height:30px;background:#2c5a48;"></div>
<div class="a" style="left:46px;top:197px;width:127px;height:1px;background:#2f5e4b;"></div>
<div class="t" style="left:58.3px;top:176.19px;font-size:13.6px;color:#fff;font-weight:bold;letter-spacing:-0.35px;">Table3</div>
<svg class="a" style="left:110px;top:180.5px" width="11" height="8" viewBox="0 0 11 8"><path d="M1 1.300L5.500 6 10 1.300" fill="none" stroke="#fff" stroke-width="1.500"/></svg>
<svg class="a" style="left:141.25px;top:172.05px;" width="21.5" height="21.5" viewBox="0 0 24 24" ><path fill="#fff" d="M19 7H9c-1.1 0-2 .9-2 2v10c0 1.1.9 2 2 2h10c1.1 0 2-.9 2-2V9c0-1.1-.9-2-2-2zm0 2v2H9V9h10zm-6 6v-2h2v2h-2zm2 2v2h-2v-2h2zm-4-2H9v-2h2v2zm6-2h2v2h-2v-2zm-8 4h2v2H9v-2zm8 2v-2h2v2h-2zM6 17H5c-1.1 0-2-.9-2-2V5c0-1.1.9-2 2-2h10c1.1 0 2 .9 2 2v1h-2V5H5v10h1v2z"/></svg>
<div class="a" style="left:46px;top:197px;width:403px;height:30px;background:#356854;"></div>
<div class="a" style="left:449px;top:197px;width:519px;height:31px;background:#000;"></div>
<div class="a" style="left:450px;top:198px;width:100px;height:29px;background:#0b5394;"></div>
<div class="a" style="left:551px;top:198px;width:100px;height:29px;background:#0b5394;"></div>
<div class="a" style="left:652px;top:198px;width:100px;height:29px;background:#0b5394;"></div>
<div class="a" style="left:753px;top:198px;width:214px;height:29px;background:#0b5394;"></div>
<div class="t" style="left:54px;top:205.80px;font-size:13px;color:#fff;width:66px;overflow:hidden;height:16px;-webkit-text-stroke:0.300px #fff;">Scrol Number</div>
<svg class="a" style="left:125.5px;top:211px" width="10.5" height="7" viewBox="0 0 10.500 7"><path d="M0.800 1L5.250 5.600 9.700 1" fill="none" stroke="#fff" stroke-width="1.700"/></svg>
<div class="t" style="left:155.5px;top:205.80px;font-size:13px;color:#fff;width:66.5px;overflow:hidden;height:16px;-webkit-text-stroke:0.300px #fff;">Name</div>
<svg class="a" style="left:226px;top:211px" width="10.5" height="7" viewBox="0 0 10.500 7"><path d="M0.800 1L5.250 5.600 9.700 1" fill="none" stroke="#fff" stroke-width="1.700"/></svg>
<div class="t" style="left:256.4px;top:205.80px;font-size:13px;color:#fff;width:65.60000000000002px;overflow:hidden;height:16px;-webkit-text-stroke:0.300px #fff;">Meter Id</div>
<svg class="a" style="left:327px;top:211px" width="10.5" height="7" viewBox="0 0 10.500 7"><path d="M0.800 1L5.250 5.600 9.700 1" fill="none" stroke="#fff" stroke-width="1.700"/></svg>
<div class="t" style="left:357px;top:205.80px;font-size:13px;color:#fff;width:66px;overflow:hidden;height:16px;-webkit-text-stroke:0.300px #fff;">Single Valu</div>
<svg class="a" style="left:428px;top:211px" width="10.5" height="7" viewBox="0 0 10.500 7"><path d="M0.800 1L5.250 5.600 9.700 1" fill="none" stroke="#fff" stroke-width="1.700"/></svg>
<div class="t" style="left:450px;top:210.52px;font-size:13.33px;color:#fff;width:100px;text-align:center;-webkit-text-stroke:0.350px #fff;">Percentage</div>
<div class="t" style="left:551px;top:210.52px;font-size:13.33px;color:#fff;width:100px;text-align:center;-webkit-text-stroke:0.350px #fff;">Total</div>
<div class="t" style="left:652px;top:210.52px;font-size:13.33px;color:#fff;width:100px;text-align:center;-webkit-text-stroke:0.350px #fff;">Unit Percentage</div>
<div class="t" style="left:753px;top:210.52px;font-size:13.33px;color:#fff;width:214px;text-align:center;-webkit-text-stroke:0.350px #fff;">Complete Status</div>
<div class="a" style="left:46px;top:227px;width:922px;height:631px;background:#000;"></div>
<div class="c" style="left:46px;top:228px;width:100px;background:#ffffff;"><span style="left:3.6px;width:96.1px;height:16px;overflow:hidden;">M1010</span></div>
<div class="c" style="left:147px;top:228px;width:100px;background:#ffffff;"><span style="left:2.6px;width:97.1px;height:16px;overflow:hidden;">Roman Paul</span></div>
<div class="c" style="left:248px;top:228px;width:100px;background:#ffffff;text-align:center;"><span style="left:0;width:100px">10105352</span></div>
<div class="c" style="left:349px;top:228px;width:100px;background:#ffffff;text-align:center;"><span style="left:0;width:100px">25</span></div>
<div class="c" style="left:450px;top:228px;width:100px;background:#ffffff;text-align:center;"><span style="left:0;width:100px">24.51</span></div>
<div class="c" style="left:551px;top:228px;width:100px;background:#ffffff;text-align:center;"><span style="left:0;width:100px">102</span></div>
<div class="c" style="left:652px;top:228px;width:100px;background:#ffffff;text-align:center;"><span style="left:0;width:100px">24.51</span></div>
<div class="c" style="left:753px;top:228px;width:214px;background:#ffffff;"></div>
<div class="chip" style="top:230px;background:#11734b;color:#d4edbc;"><b>High</b><i style="border-top-color:#d4edbc"></i></div>
<div class="c" style="left:46px;top:249px;width:100px;background:#f6f8f9;"><span style="left:3.6px;width:96.1px;height:16px;overflow:hidden;">M1011</span></div>
<div class="c" style="left:147px;top:249px;width:100px;background:#f6f8f9;"><span style="left:2.6px;width:97.1px;height:16px;overflow:hidden;">Mohsin</span></div>
<div class="c" style="left:248px;top:249px;width:100px;background:#f6f8f9;text-align:center;"><span style="left:0;width:100px">10105353</span></div>
<div class="c" style="left:349px;top:249px;width:100px;background:#f6f8f9;text-align:center;"><span style="left:0;width:100px">25</span></div>
<div class="c" style="left:450px;top:249px;width:100px;background:#f6f8f9;text-align:center;"><span style="left:0;width:100px">20.00</span></div>
<div class="c" style="left:551px;top:249px;width:100px;background:#f6f8f9;text-align:center;"><span style="left:0;width:100px">125</span></div>
<div class="c" style="left:652px;top:249px;width:100px;background:#f6f8f9;text-align:center;"><span style="left:0;width:100px">20.00</span></div>
<div class="c" style="left:753px;top:249px;width:214px;background:#f6f8f9;"></div>
<div class="chip" style="top:251px;background:#5a3286;color:#e6cff2;"><b>Medium</b><i style="border-top-color:#e6cff2"></i></div>
<div class="c" style="left:46px;top:270px;width:100px;background:#ffffff;"><span style="left:3.6px;width:96.1px;height:16px;overflow:hidden;">M1012</span></div>
<div class="c" style="left:147px;top:270px;width:100px;background:#ffffff;"><span style="left:2.6px;width:97.1px;height:16px;overflow:hidden;">Rahman</span></div>
<div class="c" style="left:248px;top:270px;width:100px;background:#ffffff;text-align:center;"><span style="left:0;width:100px">10105354</span></div>
<div class="c" style="left:349px;top:270px;width:100px;background:#ffffff;text-align:center;"><span style="left:0;width:100px">22</span></div>
<div class="c" style="left:450px;top:270px;width:100px;background:#ffffff;text-align:center;"><span style="left:0;width:100px">16.30</span></div>
<div class="c" style="left:551px;top:270px;width:100px;background:#ffffff;text-align:center;"><span style="left:0;width:100px">135</span></div>
<div class="c" style="left:652px;top:270px;width:100px;background:#ffffff;text-align:center;"><span style="left:0;width:100px">16.30</span></div>
<div class="c" style="left:753px;top:270px;width:214px;background:#ffffff;"></div>
<div class="chip" style="top:272px;background:#5a3286;color:#e6cff2;"><b>Medium</b><i style="border-top-color:#e6cff2"></i></div>
<div class="c" style="left:46px;top:291px;width:100px;background:#f6f8f9;"><span style="left:3.6px;width:96.1px;height:16px;overflow:hidden;">M1013</span></div>
<div class="c" style="left:147px;top:291px;width:100px;background:#f6f8f9;"><span style="left:2.6px;width:97.1px;height:16px;overflow:hidden;">Ratan</span></div>
<div class="c" style="left:248px;top:291px;width:100px;background:#f6f8f9;text-align:center;"><span style="left:0;width:100px">10105355</span></div>
<div class="c" style="left:349px;top:291px;width:100px;background:#f6f8f9;text-align:center;"><span style="left:0;width:100px">12</span></div>
<div class="c" style="left:450px;top:291px;width:100px;background:#f6f8f9;text-align:center;"><span style="left:0;width:100px">7.89</span></div>
<div class="c" style="left:551px;top:291px;width:100px;background:#f6f8f9;text-align:center;"><span style="left:0;width:100px">152</span></div>
<div class="c" style="left:652px;top:291px;width:100px;background:#f6f8f9;text-align:center;"><span style="left:0;width:100px">7.89</span></div>
<div class="c" style="left:753px;top:291px;width:214px;background:#f6f8f9;"></div>
<div class="chip" style="top:293px;background:#11734b;color:#d4edbc;"><b>High</b><i style="border-top-color:#d4edbc"></i></div>
<div class="c" style="left:46px;top:312px;width:100px;background:#ffffff;"><span style="left:3.6px;width:96.1px;height:16px;overflow:hidden;">M1014</span></div>
<div class="c" style="left:147px;top:312px;width:100px;background:#ffffff;"><span style="left:2.6px;width:97.1px;height:16px;overflow:hidden;">Milli Rahman</span></div>
<div class="c" style="left:248px;top:312px;width:100px;background:#ffffff;text-align:center;"><span style="left:0;width:100px">10105356</span></div>
<div class="c" style="left:349px;top:312px;width:100px;background:#ffffff;text-align:center;"><span style="left:0;width:100px">36</span></div>
<div class="c" style="left:450px;top:312px;width:100px;background:#ffffff;text-align:center;"><span style="left:0;width:100px">22.50</span></div>
<div class="c" style="left:551px;top:312px;width:100px;background:#ffffff;text-align:center;"><span style="left:0;width:100px">160</span></div>
<div class="c" style="left:652px;top:312px;width:100px;background:#ffffff;text-align:center;"><span style="left:0;width:100px">22.50</span></div>
<div class="c" style="left:753px;top:312px;width:214px;background:#ffffff;"></div>
<div class="chip" style="top:314px;background:#b10202;color:#ffcfc9;"><b>Low</b><i style="border-top-color:#ffcfc9"></i></div>
<div class="c" style="left:46px;top:333px;width:100px;background:#f6f8f9;"><span style="left:3.6px;width:96.1px;height:16px;overflow:hidden;">M1015</span></div>
<div class="c" style="left:147px;top:333px;width:100px;background:#f6f8f9;"><span style="left:2.6px;width:97.1px;height:16px;overflow:hidden;">John Brown</span></div>
<div class="c" style="left:248px;top:333px;width:100px;background:#f6f8f9;text-align:center;"><span style="left:0;width:100px">10105357</span></div>
<div class="c" style="left:349px;top:333px;width:100px;background:#f6f8f9;text-align:center;"><span style="left:0;width:100px">27</span></div>
<div class="c" style="left:450px;top:333px;width:100px;background:#f6f8f9;text-align:center;"><span style="left:0;width:100px">15.03</span></div>
<div class="c" style="left:551px;top:333px;width:100px;background:#f6f8f9;text-align:center;"><span style="left:0;width:100px">178</span></div>
<div class="c" style="left:652px;top:333px;width:100px;background:#f6f8f9;text-align:center;"><span style="left:0;width:100px">15.03</span></div>
<div class="c" style="left:753px;top:333px;width:214px;background:#f6f8f9;"></div>
<div class="chip" style="top:335px;background:#11734b;color:#d4edbc;"><b>High</b><i style="border-top-color:#d4edbc"></i></div>
<div class="c" style="left:46px;top:354px;width:100px;background:#ffffff;"><span style="left:3.6px;width:96.1px;height:16px;overflow:hidden;">M1016</span></div>
<div class="c" style="left:147px;top:354px;width:100px;background:#ffffff;"><span style="left:2.6px;width:97.1px;height:16px;overflow:hidden;">David Jones</span></div>
<div class="c" style="left:248px;top:354px;width:100px;background:#ffffff;text-align:center;"><span style="left:0;width:100px">10105358</span></div>
<div class="c" style="left:349px;top:354px;width:100px;background:#ffffff;text-align:center;"><span style="left:0;width:100px">28</span></div>
<div class="c" style="left:450px;top:354px;width:100px;background:#ffffff;text-align:center;"><span style="left:0;width:100px">14.38</span></div>
<div class="c" style="left:551px;top:354px;width:100px;background:#ffffff;text-align:center;"><span style="left:0;width:100px">192</span></div>
<div class="c" style="left:652px;top:354px;width:100px;background:#ffffff;text-align:center;"><span style="left:0;width:100px">14.38</span></div>
<div class="c" style="left:753px;top:354px;width:214px;background:#ffffff;"></div>
<div class="chip" style="top:356px;background:#5a3286;color:#e6cff2;"><b>Medium</b><i style="border-top-color:#e6cff2"></i></div>
<div class="c" style="left:46px;top:375px;width:100px;background:#f6f8f9;"><span style="left:3.6px;width:96.1px;height:16px;overflow:hidden;">M1017</span></div>
<div class="c" style="left:147px;top:375px;width:100px;background:#f6f8f9;"><span style="left:2.6px;width:97.1px;height:16px;overflow:hidden;">William Miller</span></div>
<div class="c" style="left:248px;top:375px;width:100px;background:#f6f8f9;text-align:center;"><span style="left:0;width:100px">10105359</span></div>
<div class="c" style="left:349px;top:375px;width:100px;background:#f6f8f9;text-align:center;"><span style="left:0;width:100px">29</span></div>
<div class="c" style="left:450px;top:375px;width:100px;background:#f6f8f9;text-align:center;"><span style="left:0;width:100px">13.81</span></div>
<div class="c" style="left:551px;top:375px;width:100px;background:#f6f8f9;text-align:center;"><span style="left:0;width:100px">206</span></div>
<div class="c" style="left:652px;top:375px;width:100px;background:#f6f8f9;text-align:center;"><span style="left:0;width:100px">13.81</span></div>
<div class="c" style="left:753px;top:375px;width:214px;background:#f6f8f9;"></div>
<div class="chip" style="top:377px;background:#5a3286;color:#e6cff2;"><b>Medium</b><i style="border-top-color:#e6cff2"></i></div>
<div class="c" style="left:46px;top:396px;width:100px;background:#ffffff;"><span style="left:3.6px;width:96.1px;height:16px;overflow:hidden;">M1018</span></div>
<div class="c" style="left:147px;top:396px;width:100px;background:#ffffff;"><span style="left:2.6px;width:97.1px;height:16px;overflow:hidden;">Richard Davis</span></div>
<div class="c" style="left:248px;top:396px;width:100px;background:#ffffff;text-align:center;"><span style="left:0;width:100px">10105360</span></div>
<div class="c" style="left:349px;top:396px;width:100px;background:#ffffff;text-align:center;"><span style="left:0;width:100px">29</span></div>
<div class="c" style="left:450px;top:396px;width:100px;background:#ffffff;text-align:center;"><span style="left:0;width:100px">13.33</span></div>
<div class="c" style="left:551px;top:396px;width:100px;background:#ffffff;text-align:center;"><span style="left:0;width:100px">221</span></div>
<div class="c" style="left:652px;top:396px;width:100px;background:#ffffff;text-align:center;"><span style="left:0;width:100px">13.33</span></div>
<div class="c" style="left:753px;top:396px;width:214px;background:#ffffff;"></div>
<div class="chip" style="top:398px;background:#5a3286;color:#e6cff2;"><b>Medium</b><i style="border-top-color:#e6cff2"></i></div>
<div class="c" style="left:46px;top:417px;width:100px;background:#f6f8f9;"><span style="left:3.6px;width:96.1px;height:16px;overflow:hidden;">M1019</span></div>
<div class="c" style="left:147px;top:417px;width:100px;background:#f6f8f9;"><span style="left:2.6px;width:97.1px;height:16px;overflow:hidden;">Joseph Garcia</span></div>
<div class="c" style="left:248px;top:417px;width:100px;background:#f6f8f9;text-align:center;"><span style="left:0;width:100px">10105361</span></div>
<div class="c" style="left:349px;top:417px;width:100px;background:#f6f8f9;text-align:center;"><span style="left:0;width:100px">30</span></div>
<div class="c" style="left:450px;top:417px;width:100px;background:#f6f8f9;text-align:center;"><span style="left:0;width:100px">12.90</span></div>
<div class="c" style="left:551px;top:417px;width:100px;background:#f6f8f9;text-align:center;"><span style="left:0;width:100px">235</span></div>
<div class="c" style="left:652px;top:417px;width:100px;background:#f6f8f9;text-align:center;"><span style="left:0;width:100px">12.90</span></div>
<div class="c" style="left:753px;top:417px;width:214px;background:#f6f8f9;"></div>
<div class="chip" style="top:419px;background:#5a3286;color:#e6cff2;"><b>Medium</b><i style="border-top-color:#e6cff2"></i></div>
<div class="c" style="left:46px;top:438px;width:100px;background:#ffffff;"><span style="left:3.6px;width:96.1px;height:16px;overflow:hidden;">M1020</span></div>
<div class="c" style="left:147px;top:438px;width:100px;background:#ffffff;"><span style="left:2.6px;width:97.1px;height:16px;overflow:hidden;">Thomas Rodriguez</span></div>
<div class="c" style="left:248px;top:438px;width:100px;background:#ffffff;text-align:center;"><span style="left:0;width:100px">10105362</span></div>
<div class="c" style="left:349px;top:438px;width:100px;background:#ffffff;text-align:center;"><span style="left:0;width:100px">31</span></div>
<div class="c" style="left:450px;top:438px;width:100px;background:#ffffff;text-align:center;"><span style="left:0;width:100px">12.52</span></div>
<div class="c" style="left:551px;top:438px;width:100px;background:#ffffff;text-align:center;"><span style="left:0;width:100px">249</span></div>
<div class="c" style="left:652px;top:438px;width:100px;background:#ffffff;text-align:center;"><span style="left:0;width:100px">12.52</span></div>
<div class="c" style="left:753px;top:438px;width:214px;background:#ffffff;"></div>
<div class="chip" style="top:440px;background:#11734b;color:#d4edbc;"><b>High</b><i style="border-top-color:#d4edbc"></i></div>
<div class="c" style="left:46px;top:459px;width:100px;background:#f6f8f9;"><span style="left:3.6px;width:96.1px;height:16px;overflow:hidden;">M1021</span></div>
<div class="c" style="left:147px;top:459px;width:100px;background:#f6f8f9;"><span style="left:2.6px;width:97.1px;height:16px;overflow:hidden;">Christopher Martin</span></div>
<div class="c" style="left:248px;top:459px;width:100px;background:#f6f8f9;text-align:center;"><span style="left:0;width:100px">10105363</span></div>
<div class="c" style="left:349px;top:459px;width:100px;background:#f6f8f9;text-align:center;"><span style="left:0;width:100px">32</span></div>
<div class="c" style="left:450px;top:459px;width:100px;background:#f6f8f9;text-align:center;"><span style="left:0;width:100px">12.18</span></div>
<div class="c" style="left:551px;top:459px;width:100px;background:#f6f8f9;text-align:center;"><span style="left:0;width:100px">264</span></div>
<div class="c" style="left:652px;top:459px;width:100px;background:#f6f8f9;text-align:center;"><span style="left:0;width:100px">12.18</span></div>
<div class="c" style="left:753px;top:459px;width:214px;background:#f6f8f9;"></div>
<div class="chip" style="top:461px;background:#5a3286;color:#e6cff2;"><b>Medium</b><i style="border-top-color:#e6cff2"></i></div>
<div class="c" style="left:46px;top:480px;width:100px;background:#ffffff;"><span style="left:3.6px;width:96.1px;height:16px;overflow:hidden;">M1022</span></div>
<div class="c" style="left:147px;top:480px;width:100px;background:#ffffff;"><span style="left:2.6px;width:97.1px;height:16px;overflow:hidden;">Charles Hernandez</span></div>
<div class="c" style="left:248px;top:480px;width:100px;background:#ffffff;text-align:center;"><span style="left:0;width:100px">10105364</span></div>
<div class="c" style="left:349px;top:480px;width:100px;background:#ffffff;text-align:center;"><span style="left:0;width:100px">33</span></div>
<div class="c" style="left:450px;top:480px;width:100px;background:#ffffff;text-align:center;"><span style="left:0;width:100px">11.88</span></div>
<div class="c" style="left:551px;top:480px;width:100px;background:#ffffff;text-align:center;"><span style="left:0;width:100px">278</span></div>
<div class="c" style="left:652px;top:480px;width:100px;background:#ffffff;text-align:center;"><span style="left:0;width:100px">11.88</span></div>
<div class="c" style="left:753px;top:480px;width:214px;background:#ffffff;"></div>
<div class="chip" style="top:482px;background:#5a3286;color:#e6cff2;"><b>Medium</b><i style="border-top-color:#e6cff2"></i></div>
<div class="c" style="left:46px;top:501px;width:100px;background:#f6f8f9;"><span style="left:3.6px;width:96.1px;height:16px;overflow:hidden;">M1023</span></div>
<div class="c" style="left:147px;top:501px;width:100px;background:#f6f8f9;"><span style="left:2.6px;width:97.1px;height:16px;overflow:hidden;">Daniel Lopez</span></div>
<div class="c" style="left:248px;top:501px;width:100px;background:#f6f8f9;text-align:center;"><span style="left:0;width:100px">10105365</span></div>
<div class="c" style="left:349px;top:501px;width:100px;background:#f6f8f9;text-align:center;"><span style="left:0;width:100px">34</span></div>
<div class="c" style="left:450px;top:501px;width:100px;background:#f6f8f9;text-align:center;"><span style="left:0;width:100px">11.61</span></div>
<div class="c" style="left:551px;top:501px;width:100px;background:#f6f8f9;text-align:center;"><span style="left:0;width:100px">292</span></div>
<div class="c" style="left:652px;top:501px;width:100px;background:#f6f8f9;text-align:center;"><span style="left:0;width:100px">11.61</span></div>
<div class="c" style="left:753px;top:501px;width:214px;background:#f6f8f9;"></div>
<div class="chip" style="top:503px;background:#5a3286;color:#e6cff2;"><b>Medium</b><i style="border-top-color:#e6cff2"></i></div>
<div class="c" style="left:46px;top:522px;width:100px;background:#ffffff;"><span style="left:3.6px;width:96.1px;height:16px;overflow:hidden;">M1024</span></div>
<div class="c" style="left:147px;top:522px;width:100px;background:#ffffff;"><span style="left:2.6px;width:97.1px;height:16px;overflow:hidden;">Matthew Gonzalez</span></div>
<div class="c" style="left:248px;top:522px;width:100px;background:#ffffff;text-align:center;"><span style="left:0;width:100px">10105366</span></div>
<div class="c" style="left:349px;top:522px;width:100px;background:#ffffff;text-align:center;"><span style="left:0;width:100px">35</span></div>
<div class="c" style="left:450px;top:522px;width:100px;background:#ffffff;text-align:center;"><span style="left:0;width:100px">11.36</span></div>
<div class="c" style="left:551px;top:522px;width:100px;background:#ffffff;text-align:center;"><span style="left:0;width:100px">306</span></div>
<div class="c" style="left:652px;top:522px;width:100px;background:#ffffff;text-align:center;"><span style="left:0;width:100px">11.36</span></div>
<div class="c" style="left:753px;top:522px;width:214px;background:#ffffff;"></div>
<div class="chip" style="top:524px;background:#e8eaed;"><i style="border-top-color:#3c1010"></i></div>
<div class="c" style="left:46px;top:543px;width:100px;background:#f6f8f9;"><span style="left:3.6px;width:96.1px;height:16px;overflow:hidden;">M1025</span></div>
<div class="c" style="left:147px;top:543px;width:100px;background:#f6f8f9;"><span style="left:2.6px;width:97.1px;height:16px;overflow:hidden;">Anthony Wilson</span></div>
<div class="c" style="left:248px;top:543px;width:100px;background:#f6f8f9;text-align:center;"><span style="left:0;width:100px">10105367</span></div>
<div class="c" style="left:349px;top:543px;width:100px;background:#f6f8f9;text-align:center;"><span style="left:0;width:100px">36</span></div>
<div class="c" style="left:450px;top:543px;width:100px;background:#f6f8f9;text-align:center;"><span style="left:0;width:100px">119.00</span></div>
<div class="c" style="left:551px;top:543px;width:100px;background:#f6f8f9;text-align:center;"><span style="left:0;width:100px">30</span></div>
<div class="c" style="left:652px;top:543px;width:100px;background:#f6f8f9;text-align:center;"><span style="left:0;width:100px">119.00</span></div>
<div class="c" style="left:753px;top:543px;width:214px;background:#f6f8f9;"></div>
<div class="chip" style="top:545px;background:#5a3286;color:#e6cff2;"><b>Medium</b><i style="border-top-color:#e6cff2"></i></div>
<div class="c" style="left:46px;top:564px;width:100px;background:#ffffff;"><span style="left:3.6px;width:96.1px;height:16px;overflow:hidden;">M1026</span></div>
<div class="c" style="left:147px;top:564px;width:100px;background:#ffffff;"><span style="left:2.6px;width:97.1px;height:16px;overflow:hidden;">Mark Anderson</span></div>
<div class="c" style="left:248px;top:564px;width:100px;background:#ffffff;text-align:center;"><span style="left:0;width:100px">10105368</span></div>
<div class="c" style="left:349px;top:564px;width:100px;background:#ffffff;text-align:center;"><span style="left:0;width:100px">37</span></div>
<div class="c" style="left:450px;top:564px;width:100px;background:#ffffff;text-align:center;"><span style="left:0;width:100px">10.93</span></div>
<div class="c" style="left:551px;top:564px;width:100px;background:#ffffff;text-align:center;"><span style="left:0;width:100px">335</span></div>
<div class="c" style="left:652px;top:564px;width:100px;background:#ffffff;text-align:center;"><span style="left:0;width:100px">10.93</span></div>
<div class="c" style="left:753px;top:564px;width:214px;background:#ffffff;"></div>
<div class="chip" style="top:566px;background:#5a3286;color:#e6cff2;"><b>Medium</b><i style="border-top-color:#e6cff2"></i></div>
<div class="c" style="left:46px;top:585px;width:100px;background:#f6f8f9;"><span style="left:3.6px;width:96.1px;height:16px;overflow:hidden;">M1027</span></div>
<div class="c" style="left:147px;top:585px;width:100px;background:#f6f8f9;"><span style="left:2.6px;width:97.1px;height:16px;overflow:hidden;">Donald Thomas</span></div>
<div class="c" style="left:248px;top:585px;width:100px;background:#f6f8f9;text-align:center;"><span style="left:0;width:100px">10105369</span></div>
<div class="c" style="left:349px;top:585px;width:100px;background:#f6f8f9;text-align:center;"><span style="left:0;width:100px">38</span></div>
<div class="c" style="left:450px;top:585px;width:100px;background:#f6f8f9;text-align:center;"><span style="left:0;width:100px">10.74</span></div>
<div class="c" style="left:551px;top:585px;width:100px;background:#f6f8f9;text-align:center;"><span style="left:0;width:100px">349</span></div>
<div class="c" style="left:652px;top:585px;width:100px;background:#f6f8f9;text-align:center;"><span style="left:0;width:100px">10.74</span></div>
<div class="c" style="left:753px;top:585px;width:214px;background:#f6f8f9;"></div>
<div class="chip" style="top:587px;background:#5a3286;color:#e6cff2;"><b>Medium</b><i style="border-top-color:#e6cff2"></i></div>
<div class="c" style="left:46px;top:606px;width:100px;background:#ffffff;"><span style="left:3.6px;width:96.1px;height:16px;overflow:hidden;">M1028</span></div>
<div class="c" style="left:147px;top:606px;width:100px;background:#ffffff;"><span style="left:2.6px;width:97.1px;height:16px;overflow:hidden;">Steven Taylor</span></div>
<div class="c" style="left:248px;top:606px;width:100px;background:#ffffff;text-align:center;"><span style="left:0;width:100px">10105370</span></div>
<div class="c" style="left:349px;top:606px;width:100px;background:#ffffff;text-align:center;"><span style="left:0;width:100px">38</span></div>
<div class="c" style="left:450px;top:606px;width:100px;background:#ffffff;text-align:center;"><span style="left:0;width:100px">106.67</span></div>
<div class="c" style="left:551px;top:606px;width:100px;background:#ffffff;text-align:center;"><span style="left:0;width:100px">36</span></div>
<div class="c" style="left:652px;top:606px;width:100px;background:#ffffff;text-align:center;"><span style="left:0;width:100px">106.67</span></div>
<div class="c" style="left:753px;top:606px;width:214px;background:#ffffff;"></div>
<div class="chip" style="top:608px;background:#5a3286;color:#e6cff2;"><b>Medium</b><i style="border-top-color:#e6cff2"></i></div>
<div class="c" style="left:46px;top:627px;width:100px;background:#f6f8f9;"><span style="left:3.6px;width:96.1px;height:16px;overflow:hidden;">M1029</span></div>
<div class="c" style="left:147px;top:627px;width:100px;background:#f6f8f9;"><span style="left:2.6px;width:97.1px;height:16px;overflow:hidden;">Mary Moore</span></div>
<div class="c" style="left:248px;top:627px;width:100px;background:#f6f8f9;text-align:center;"><span style="left:0;width:100px">10105371</span></div>
<div class="c" style="left:349px;top:627px;width:100px;background:#f6f8f9;text-align:center;"><span style="left:0;width:100px">39</span></div>
<div class="c" style="left:450px;top:627px;width:100px;background:#f6f8f9;text-align:center;"><span style="left:0;width:100px">10.40</span></div>
<div class="c" style="left:551px;top:627px;width:100px;background:#f6f8f9;text-align:center;"><span style="left:0;width:100px">378</span></div>
<div class="c" style="left:652px;top:627px;width:100px;background:#f6f8f9;text-align:center;"><span style="left:0;width:100px">10.40</span></div>
<div class="c" style="left:753px;top:627px;width:214px;background:#f6f8f9;"></div>
<div class="chip" style="top:629px;background:#5a3286;color:#e6cff2;"><b>Medium</b><i style="border-top-color:#e6cff2"></i></div>
<div class="c" style="left:46px;top:648px;width:100px;background:#ffffff;"><span style="left:3.6px;width:96.1px;height:16px;overflow:hidden;">M1030</span></div>
<div class="c" style="left:147px;top:648px;width:100px;background:#ffffff;"><span style="left:2.6px;width:97.1px;height:16px;overflow:hidden;">Patricia Jackson</span></div>
<div class="c" style="left:248px;top:648px;width:100px;background:#ffffff;text-align:center;"><span style="left:0;width:100px">10105372</span></div>
<div class="c" style="left:349px;top:648px;width:100px;background:#ffffff;text-align:center;"><span style="left:0;width:100px">40</span></div>
<div class="c" style="left:450px;top:648px;width:100px;background:#ffffff;text-align:center;"><span style="left:0;width:100px">10.25</span></div>
<div class="c" style="left:551px;top:648px;width:100px;background:#ffffff;text-align:center;"><span style="left:0;width:100px">392</span></div>
<div class="c" style="left:652px;top:648px;width:100px;background:#ffffff;text-align:center;"><span style="left:0;width:100px">10.25</span></div>
<div class="c" style="left:753px;top:648px;width:214px;background:#ffffff;"></div>
<div class="chip" style="top:650px;background:#5a3286;color:#e6cff2;"><b>Medium</b><i style="border-top-color:#e6cff2"></i></div>
<div class="c" style="left:46px;top:669px;width:100px;background:#f6f8f9;"><span style="left:3.6px;width:96.1px;height:16px;overflow:hidden;">M1031</span></div>
<div class="c" style="left:147px;top:669px;width:100px;background:#f6f8f9;"><span style="left:2.6px;width:97.1px;height:16px;overflow:hidden;">Jennifer Martin</span></div>
<div class="c" style="left:248px;top:669px;width:100px;background:#f6f8f9;text-align:center;"><span style="left:0;width:100px">10105373</span></div>
<div class="c" style="left:349px;top:669px;width:100px;background:#f6f8f9;text-align:center;"><span style="left:0;width:100px">41</span></div>
<div class="c" style="left:450px;top:669px;width:100px;background:#f6f8f9;text-align:center;"><span style="left:0;width:100px">10.11</span></div>
<div class="c" style="left:551px;top:669px;width:100px;background:#f6f8f9;text-align:center;"><span style="left:0;width:100px">407</span></div>
<div class="c" style="left:652px;top:669px;width:100px;background:#f6f8f9;text-align:center;"><span style="left:0;width:100px">10.11</span></div>
<div class="c" style="left:753px;top:669px;width:214px;background:#f6f8f9;"></div>
<div class="chip" style="top:671px;background:#5a3286;color:#e6cff2;"><b>Medium</b><i style="border-top-color:#e6cff2"></i></div>
<div class="c" style="left:46px;top:690px;width:100px;background:#ffffff;"><span style="left:3.6px;width:96.1px;height:16px;overflow:hidden;">M1032</span></div>
<div class="c" style="left:147px;top:690px;width:100px;background:#ffffff;"><span style="left:2.6px;width:97.1px;height:16px;overflow:hidden;">Linda Lee</span></div>
<div class="c" style="left:248px;top:690px;width:100px;background:#ffffff;text-align:center;"><span style="left:0;width:100px">10105374</span></div>
<div class="c" style="left:349px;top:690px;width:100px;background:#ffffff;text-align:center;"><span style="left:0;width:100px">42</span></div>
<div class="c" style="left:450px;top:690px;width:100px;background:#ffffff;text-align:center;"><span style="left:0;width:100px">9.98</span></div>
<div class="c" style="left:551px;top:690px;width:100px;background:#ffffff;text-align:center;"><span style="left:0;width:100px">421</span></div>
<div class="c" style="left:652px;top:690px;width:100px;background:#ffffff;text-align:center;"><span style="left:0;width:100px">9.98</span></div>
<div class="c" style="left:753px;top:690px;width:214px;background:#ffffff;"></div>
<div class="chip" style="top:692px;background:#b10202;color:#ffcfc9;"><b>Low</b><i style="border-top-color:#ffcfc9"></i></div>
<div class="c" style="left:46px;top:711px;width:100px;background:#f6f8f9;"><span style="left:3.6px;width:96.1px;height:16px;overflow:hidden;">M1033</span></div>
<div class="c" style="left:147px;top:711px;width:100px;background:#f6f8f9;"><span style="left:2.6px;width:97.1px;height:16px;overflow:hidden;">Elizabeth White</span></div>
<div class="c" style="left:248px;top:711px;width:100px;background:#f6f8f9;text-align:center;"><span style="left:0;width:100px">10105375</span></div>
<div class="c" style="left:349px;top:711px;width:100px;background:#f6f8f9;text-align:center;"><span style="left:0;width:100px">43</span></div>
<div class="c" style="left:450px;top:711px;width:100px;background:#f6f8f9;text-align:center;"><span style="left:0;width:100px">9.86</span></div>
<div class="c" style="left:551px;top:711px;width:100px;background:#f6f8f9;text-align:center;"><span style="left:0;width:100px">435</span></div>
<div class="c" style="left:652px;top:711px;width:100px;background:#f6f8f9;text-align:center;"><span style="left:0;width:100px">9.86</span></div>
<div class="c" style="left:753px;top:711px;width:214px;background:#f6f8f9;"></div>
<div class="chip" style="top:713px;background:#5a3286;color:#e6cff2;"><b>Medium</b><i style="border-top-color:#e6cff2"></i></div>
<div class="c" style="left:46px;top:732px;width:100px;background:#ffffff;"><span style="left:3.6px;width:96.1px;height:16px;overflow:hidden;">M1034</span></div>
<div class="c" style="left:147px;top:732px;width:100px;background:#ffffff;"><span style="left:2.6px;width:97.1px;height:16px;overflow:hidden;">Barbara Harris</span></div>
<div class="c" style="left:248px;top:732px;width:100px;background:#ffffff;text-align:center;"><span style="left:0;width:100px">10105376</span></div>
<div class="c" style="left:349px;top:732px;width:100px;background:#ffffff;text-align:center;"><span style="left:0;width:100px">44</span></div>
<div class="c" style="left:450px;top:732px;width:100px;background:#ffffff;text-align:center;"><span style="left:0;width:100px">9.75</span></div>
<div class="c" style="left:551px;top:732px;width:100px;background:#ffffff;text-align:center;"><span style="left:0;width:100px">449</span></div>
<div class="c" style="left:652px;top:732px;width:100px;background:#ffffff;text-align:center;"><span style="left:0;width:100px">9.75</span></div>
<div class="c" style="left:753px;top:732px;width:214px;background:#ffffff;"></div>
<div class="chip" style="top:734px;background:#5a3286;color:#e6cff2;"><b>Medium</b><i style="border-top-color:#e6cff2"></i></div>
<div class="c" style="left:46px;top:753px;width:100px;background:#f6f8f9;"><span style="left:3.6px;width:96.1px;height:16px;overflow:hidden;">M1035</span></div>
<div class="c" style="left:147px;top:753px;width:100px;background:#f6f8f9;"><span style="left:2.6px;width:97.1px;height:16px;overflow:hidden;">Susan Clark</span></div>
<div class="c" style="left:248px;top:753px;width:100px;background:#f6f8f9;text-align:center;"><span style="left:0;width:100px">10105377</span></div>
<div class="c" style="left:349px;top:753px;width:100px;background:#f6f8f9;text-align:center;"><span style="left:0;width:100px">45</span></div>
<div class="c" style="left:450px;top:753px;width:100px;background:#f6f8f9;text-align:center;"><span style="left:0;width:100px">9.64</span></div>
<div class="c" style="left:551px;top:753px;width:100px;background:#f6f8f9;text-align:center;"><span style="left:0;width:100px">464</span></div>
<div class="c" style="left:652px;top:753px;width:100px;background:#f6f8f9;text-align:center;"><span style="left:0;width:100px">9.64</span></div>
<div class="c" style="left:753px;top:753px;width:214px;background:#f6f8f9;"></div>
<div class="chip" style="top:755px;background:#5a3286;color:#e6cff2;"><b>Medium</b><i style="border-top-color:#e6cff2"></i></div>
<div class="c" style="left:46px;top:774px;width:100px;background:#ffffff;"><span style="left:3.6px;width:96.1px;height:16px;overflow:hidden;">M1036</span></div>
<div class="c" style="left:147px;top:774px;width:100px;background:#ffffff;"><span style="left:2.6px;width:97.1px;height:16px;overflow:hidden;">Jessica Lewis</span></div>
<div class="c" style="left:248px;top:774px;width:100px;background:#ffffff;text-align:center;"><span style="left:0;width:100px">10105378</span></div>
<div class="c" style="left:349px;top:774px;width:100px;background:#ffffff;text-align:center;"><span style="left:0;width:100px">46</span></div>
<div class="c" style="left:450px;top:774px;width:100px;background:#ffffff;text-align:center;"><span style="left:0;width:100px">9.54</span></div>
<div class="c" style="left:551px;top:774px;width:100px;background:#ffffff;text-align:center;"><span style="left:0;width:100px">478</span></div>
<div class="c" style="left:652px;top:774px;width:100px;background:#ffffff;text-align:center;"><span style="left:0;width:100px">9.54</span></div>
<div class="c" style="left:753px;top:774px;width:214px;background:#ffffff;"></div>
<div class="chip" style="top:776px;background:#5a3286;color:#e6cff2;"><b>Medium</b><i style="border-top-color:#e6cff2"></i></div>
<div class="c" style="left:46px;top:795px;width:100px;background:#f6f8f9;"><span style="left:3.6px;width:96.1px;height:16px;overflow:hidden;">M1037</span></div>
<div class="c" style="left:147px;top:795px;width:100px;background:#f6f8f9;"><span style="left:2.6px;width:97.1px;height:16px;overflow:hidden;">Karen Robinson</span></div>
<div class="c" style="left:248px;top:795px;width:100px;background:#f6f8f9;text-align:center;"><span style="left:0;width:100px">10105379</span></div>
<div class="c" style="left:349px;top:795px;width:100px;background:#f6f8f9;text-align:center;"><span style="left:0;width:100px">47</span></div>
<div class="c" style="left:450px;top:795px;width:100px;background:#f6f8f9;text-align:center;"><span style="left:0;width:100px">9.45</span></div>
<div class="c" style="left:551px;top:795px;width:100px;background:#f6f8f9;text-align:center;"><span style="left:0;width:100px">492</span></div>
<div class="c" style="left:652px;top:795px;width:100px;background:#f6f8f9;text-align:center;"><span style="left:0;width:100px">9.45</span></div>
<div class="c" style="left:753px;top:795px;width:214px;background:#f6f8f9;"></div>
<div class="chip" style="top:797px;background:#5a3286;color:#e6cff2;"><b>Medium</b><i style="border-top-color:#e6cff2"></i></div>
<div class="c" style="left:46px;top:816px;width:100px;background:#ffffff;"><span style="left:3.6px;width:96.1px;height:16px;overflow:hidden;">M1038</span></div>
<div class="c" style="left:147px;top:816px;width:100px;background:#ffffff;"><span style="left:2.6px;width:97.1px;height:16px;overflow:hidden;">Sarah Walker</span></div>
<div class="c" style="left:248px;top:816px;width:100px;background:#ffffff;text-align:center;"><span style="left:0;width:100px">10105380</span></div>
<div class="c" style="left:349px;top:816px;width:100px;background:#ffffff;text-align:center;"><span style="left:0;width:100px">47</span></div>
<div class="c" style="left:450px;top:816px;width:100px;background:#ffffff;text-align:center;"><span style="left:0;width:100px">9.36</span></div>
<div class="c" style="left:551px;top:816px;width:100px;background:#ffffff;text-align:center;"><span style="left:0;width:100px">507</span></div>
<div class="c" style="left:652px;top:816px;width:100px;background:#ffffff;text-align:center;"><span style="left:0;width:100px">9.36</span></div>
<div class="c" style="left:753px;top:816px;width:214px;background:#ffffff;"></div>
<div class="chip" style="top:818px;background:#5a3286;color:#e6cff2;"><b>Medium</b><i style="border-top-color:#e6cff2"></i></div>
<div class="c" style="left:46px;top:837px;width:100px;background:#f6f8f9;"><span style="left:3.6px;width:96.1px;height:16px;overflow:hidden;">M1039</span></div>
<div class="c" style="left:147px;top:837px;width:100px;background:#f6f8f9;"><span style="left:2.6px;width:97.1px;height:16px;overflow:hidden;">Lisa Young</span></div>
<div class="c" style="left:248px;top:837px;width:100px;background:#f6f8f9;text-align:center;"><span style="left:0;width:100px">10105381</span></div>
<div class="c" style="left:349px;top:837px;width:100px;background:#f6f8f9;text-align:center;"><span style="left:0;width:100px">48</span></div>
<div class="c" style="left:450px;top:837px;width:100px;background:#f6f8f9;text-align:center;"><span style="left:0;width:100px">9.27</span></div>
<div class="c" style="left:551px;top:837px;width:100px;background:#f6f8f9;text-align:center;"><span style="left:0;width:100px">521</span></div>
<div class="c" style="left:652px;top:837px;width:100px;background:#f6f8f9;text-align:center;"><span style="left:0;width:100px">9.27</span></div>
<div class="c" style="left:753px;top:837px;width:214px;background:#f6f8f9;"></div>
<div class="chip" style="top:839px;background:#5a3286;color:#e6cff2;"><b>Medium</b><i style="border-top-color:#e6cff2"></i></div>
<div class="a" style="left:967px;top:521px;width:98px;height:18px;border:2px solid #1a6ad8;"></div>
<div class="a" style="left:1064.900px;top:539px;width:8px;height:8px;border-radius:50%;background:#0b5fe0;box-shadow:0 0 0 1px #fff;"></div>
<div class="a" style="left:1557px;top:168px;width:12px;height:730px;background:#fff;"></div>
<div class="a" style="left:1558px;top:169px;width:9px;height:26px;border-radius:4.500px;background:#dadce0;"></div>
<div class="a" style="left:0;top:897px;width:1569px;height:11px;background:#fff;"></div>
<div class="a" style="left:0;top:897px;width:1569px;height:1px;background:#d9d9d9;"></div>
<div class="a" style="left:48px;top:899px;width:953px;height:11px;border-radius:5.500px;background:#dadce0;"></div>
<div class="a" style="left:1557px;top:865px;width:12px;height:1px;background:#e3e3e3;"></div>
<div class="a" style="left:1557px;top:881px;width:12px;height:1px;background:#e3e3e3;"></div>
<div class="a" style="left:1559.400px;top:870.700px;width:0;height:0;border-left:3px solid transparent;border-right:3px solid transparent;border-bottom:3.600px solid #55585c;"></div>
<div class="a" style="left:1559.400px;top:887.500px;width:0;height:0;border-left:3px solid transparent;border-right:3px solid transparent;border-top:3.600px solid #55585c;"></div>
<div class="a" style="left:1525px;top:898px;width:1px;height:10px;background:#e3e3e3;"></div>
<div class="a" style="left:1541px;top:898px;width:1px;height:10px;background:#e3e3e3;"></div>
<div class="a" style="left:1556px;top:898px;width:1px;height:10px;background:#e3e3e3;"></div>
<div class="a" style="left:1530.700px;top:900.300px;width:0;height:0;border-top:3px solid transparent;border-bottom:3px solid transparent;border-right:3.600px solid #55585c;"></div>
<div class="a" style="left:1547.700px;top:900.300px;width:0;height:0;border-top:3px solid transparent;border-bottom:3px solid transparent;border-left:3.600px solid #55585c;"></div>
</div>
<div class="a" style="left:0;top:0;width:1569px;height:908px;background:rgba(0,0,0,0.6);"></div>
<div class="a" style="left:0;top:0;width:1569px;height:2px;background:#363d2f;"></div>
<div class="a" style="left:0;top:2px;width:1569px;height:1px;background:rgba(60,70,50,0.12);"></div>
<div class="a" style="left:972px;top:315px;width:562px;height:193px;background:#fff;border-radius:8px;"></div>
<div class="t dlgtitle" style="left:997.5px;top:342.79px;font-size:21.75px;color:#1f1f1f;">There was a problem</div>
<div class="t dlg1" style="left:997.5px;top:385.85px;font-size:14px;color:#3c4043;letter-spacing:-0.018px;">The data you entered in cell H18 violates the data validation rules set on this cell.</div>
<div class="a" style="left:997px;top:404px;width:375.500px;height:19.500px;background:#3367d6;"></div>
<div class="t dlg2" style="left:997.5px;top:405.95px;font-size:14px;color:#fff;-webkit-text-stroke:0.350px #fff;letter-spacing:-0.080px;">Please enter one of the following values: High, Medium, Low.</div>
<svg class="a" style="left:1503px;top:331px" width="15" height="15" viewBox="0 0 15 15"><path d="M2.600 2.600L12.400 12.400M12.400 2.600L2.600 12.400" fill="none" stroke="#9a9a9a" stroke-width="2"/></svg>
<div class="a" style="left:1437px;top:447px;width:72px;height:36px;border-radius:4px;background:#188038;"></div>
<div class="t" style="left:1437px;top:457.75px;font-size:14px;color:#fff;font-weight:bold;width:72px;text-align:center;">OK</div>
<svg class="a" style="left:0;top:0" width="1569" height="908" viewBox="0 0 1569 908">
<g fill="#ff0000">
<polygon points="1413.2,740.1 977.6,539.9 979.6,535.6 944.6,530.4 971.5,553.4 973.4,549.1 1410.2,746.7"/><circle cx="1411.7" cy="743.4" r="3.6"/>
<polygon points="1415.1,744.0 1452.5,521.6 1458.3,522.5 1453.7,487.3 1438.1,519.2 1443.9,520.1 1408.3,742.8"/><circle cx="1411.7" cy="743.4" r="3.4"/>
</g></svg>
<div class="t ann1" style="left:988.5px;top:679.80px;font-size:21.5px;color:#ffff7a;letter-spacing:0.350px;-webkit-text-stroke:0.300px #ffff7a;">Wrong status input show</div>
<div class="t ann2" style="left:988.5px;top:708.40px;font-size:21.5px;color:#ffff7a;letter-spacing:0.500px;-webkit-text-stroke:0.300px #ffff7a;">reject by data validation</div>
</div></body></html>
